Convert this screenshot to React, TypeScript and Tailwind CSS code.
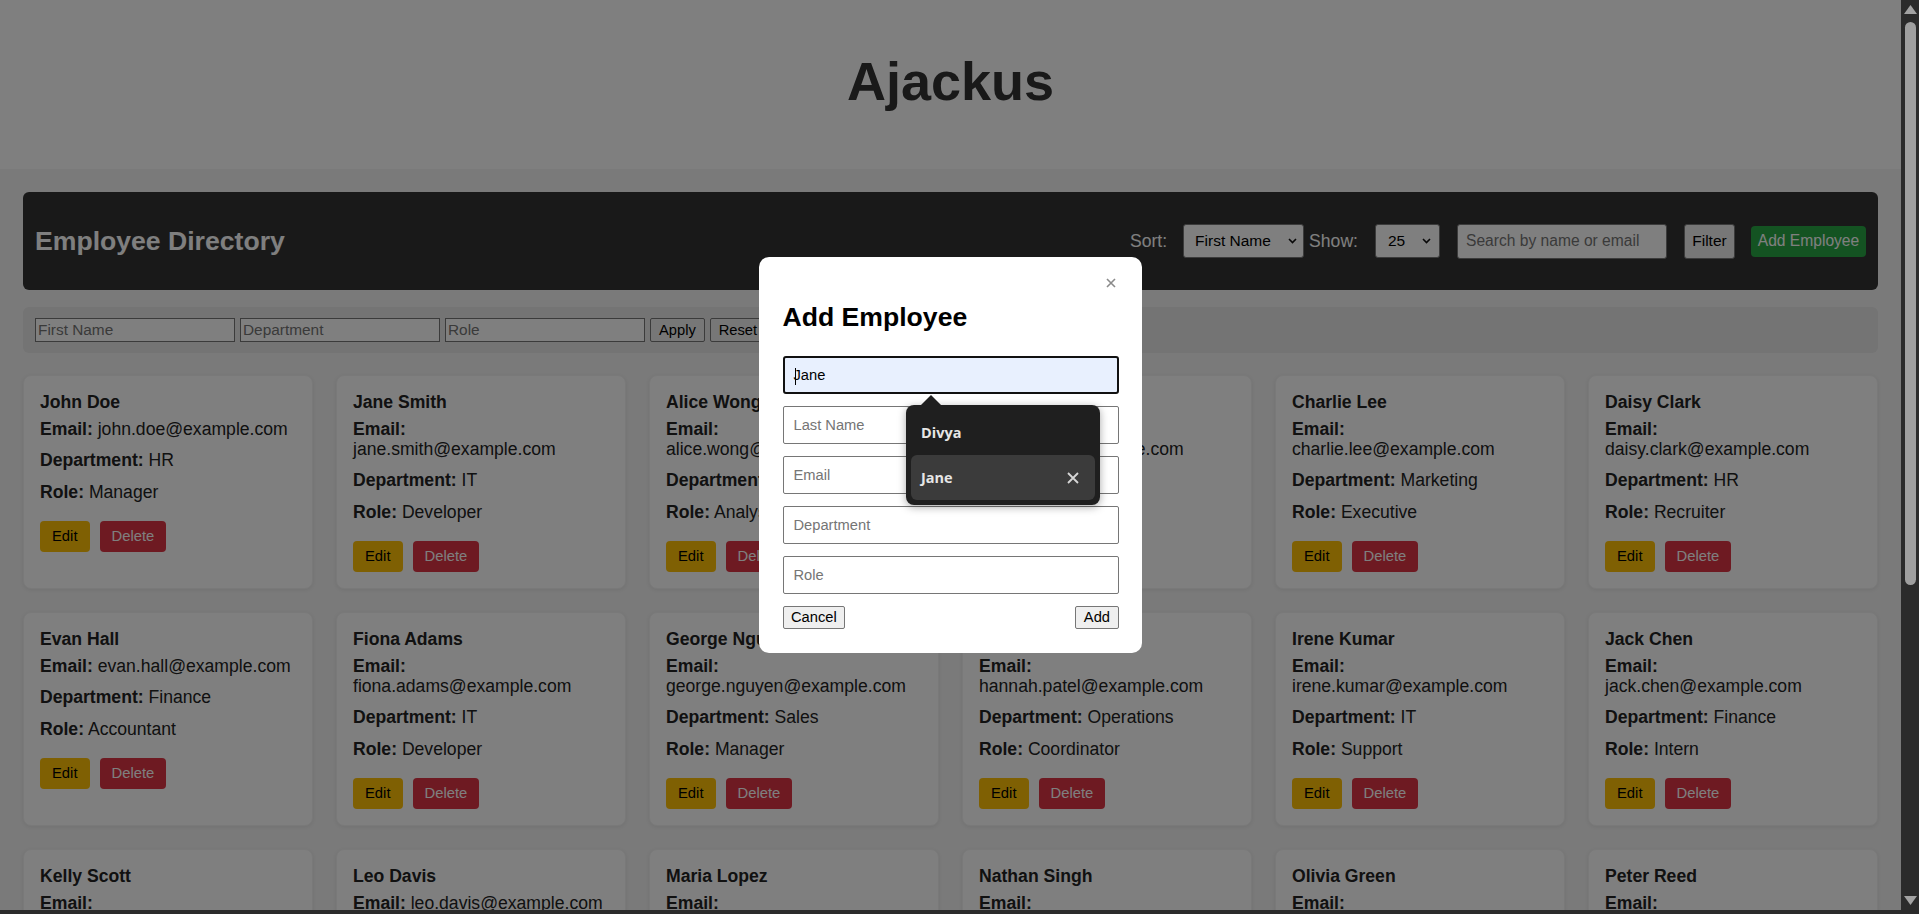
import React from "react";

type Emp = { name: string; email: string; dept: string; role: string };

const employees: Emp[] = [
  { name: "John Doe", email: "john.doe@example.com", dept: "HR", role: "Manager" },
  { name: "Jane Smith", email: "jane.smith@example.com", dept: "IT", role: "Developer" },
  { name: "Alice Wong", email: "alice.wong@example.com", dept: "Finance", role: "Analyst" },
  { name: "Bob Brown", email: "bob.brown@example.com", dept: "IT", role: "Tester" },
  { name: "Charlie Lee", email: "charlie.lee@example.com", dept: "Marketing", role: "Executive" },
  { name: "Daisy Clark", email: "daisy.clark@example.com", dept: "HR", role: "Recruiter" },
  { name: "Evan Hall", email: "evan.hall@example.com", dept: "Finance", role: "Accountant" },
  { name: "Fiona Adams", email: "fiona.adams@example.com", dept: "IT", role: "Developer" },
  { name: "George Nguyen", email: "george.nguyen@example.com", dept: "Sales", role: "Manager" },
  { name: "Hannah Patel", email: "hannah.patel@example.com", dept: "Operations", role: "Coordinator" },
  { name: "Irene Kumar", email: "irene.kumar@example.com", dept: "IT", role: "Support" },
  { name: "Jack Chen", email: "jack.chen@example.com", dept: "Finance", role: "Intern" },
  { name: "Kelly Scott", email: "kelly.scott@example.com", dept: "Marketing", role: "Designer" },
  { name: "Leo Davis", email: "leo.davis@example.com", dept: "Sales", role: "Executive" },
  { name: "Maria Lopez", email: "maria.lopez@example.com", dept: "HR", role: "Coordinator" },
  { name: "Nathan Singh", email: "nathan.singh@example.com", dept: "IT", role: "Developer" },
  { name: "Olivia Green", email: "olivia.green@example.com", dept: "Finance", role: "Analyst" },
  { name: "Peter Reed", email: "peter.reed@example.com", dept: "Operations", role: "Manager" },
];

const FONT = "font-['Liberation_Sans',Arial,sans-serif]";

function Chevron() {
  return (
    <svg width="9" height="6" viewBox="0 0 9 6" className="shrink-0">
      <path d="M1 1 L4.5 4.5 L8 1" fill="none" stroke="#111" strokeWidth="1.6" />
    </svg>
  );
}

function Card({ e }: { e: Emp }) {
  return (
    <div className="bg-white border border-[#f2f2f2] rounded-lg shadow-[0_1px_5px_rgba(0,0,0,0.08)] pl-[16px] pr-[19px] pt-4 pb-4 text-[17.6px] leading-[20px] text-[#222]">
      <h3 className="font-bold mb-[7px]">{e.name}</h3>
      <p className="mb-[11px]">
        <strong>Email:</strong> {e.email}
      </p>
      <p className="mb-[12px]">
        <strong>Department:</strong> {e.dept}
      </p>
      <p className="mb-[19px]">
        <strong>Role:</strong> {e.role}
      </p>
      <div className="flex gap-[10px]">
        <button className="bg-[#ffc107] text-black rounded-[4px] px-3 h-[31px] text-[14.8px] leading-none">
          Edit
        </button>
        <button className="bg-[#dc3545] text-white rounded-[4px] px-3 h-[31px] text-[14.8px] leading-none">
          Delete
        </button>
      </div>
    </div>
  );
}

function Page() {
  return (
    <div className="min-h-full bg-[#f5f5f5]">
      <header className="h-[169px] bg-white pt-[50px] text-center">
        <h1 className="text-[54px] font-bold leading-[62px] text-[#333]">Ajackus</h1>
      </header>
      <main className="px-[23px] pt-[23px]">
        <nav className="h-[98px] bg-[#333] rounded-md px-[12px] flex items-center justify-between">
          <h2 className="text-[26.6px] font-bold text-white leading-[30px]">Employee Directory</h2>
          <div className="flex items-center text-white">
            <span className="text-[17.6px] mr-[16px]">Sort:</span>
            <div className="w-[121px] h-[34px] bg-white border border-[#767676] rounded-[3px] pl-[11px] pr-[6px] flex items-center justify-between text-[15.5px] text-black">
              <span>First Name</span>
              <Chevron />
            </div>
            <span className="text-[17.6px] ml-[5px] mr-[17px]">Show:</span>
            <div className="w-[65px] h-[34px] bg-white border border-[#767676] rounded-[3px] pl-[12px] pr-[8px] flex items-center justify-between text-[15.5px] text-black">
              <span>25</span>
              <Chevron />
            </div>
            <div className="ml-[17px] w-[210px] h-[35px] bg-white border border-[#767676] rounded-[3px] px-[8px] flex items-center text-[15.6px] text-[#757575]">
              Search by name or email
            </div>
            <button className="ml-[17px] w-[51px] h-[35px] bg-[#efefef] border border-[#767676] rounded-[3px] text-[15.5px] text-black">
              Filter
            </button>
            <button className="ml-[16px] w-[115px] h-[31px] bg-[#28a745] rounded-[4px] text-[15.6px] text-white">
              Add Employee
            </button>
          </div>
        </nav>

        <div className="mt-[17px] h-[46px] bg-[#e8e8e8] rounded-md px-[12px] flex items-center gap-[5px]">
          {["First Name", "Department", "Role"].map((p) => (
            <div
              key={p}
              className="w-[200px] h-[24px] bg-white border border-[#767676] px-[2px] flex items-center text-[15.4px] text-[#757575]"
            >
              {p}
            </div>
          ))}
          <button className="h-[24px] bg-[#efefef] border border-[#767676] rounded-[2px] px-[8px] text-[14.7px] text-black">
            Apply
          </button>
          <button className="h-[24px] bg-[#efefef] border border-[#767676] rounded-[2px] px-[8px] text-[14.7px] text-black">
            Reset
          </button>
        </div>

        <div className="mt-[22px] grid grid-cols-6 gap-x-[23px] gap-y-[23px]">
          {employees.map((e) => (
            <Card key={e.name} e={e} />
          ))}
        </div>
      </main>
    </div>
  );
}

function Modal() {
  const fields = ["Last Name", "Email", "Department", "Role"];
  return (
    <div className="absolute inset-0 bg-black/50 flex items-center justify-center">
      <div className="relative w-[383px] bg-white rounded-[10px] px-[23.5px] pt-[24px] pb-[24px]">
        <svg width="10" height="10" viewBox="0 0 10 10" className="absolute right-[26px] top-[21px]">
          <path d="M1 1 L9 9 M9 1 L1 9" stroke="#8a8a8a" strokeWidth="1.6" />
        </svg>
        <h2 className="mt-[21px] mb-[24px] text-[26.6px] font-bold leading-[30px] text-black">Add Employee</h2>
        <div className="flex flex-col gap-[12px]">
          <div className="relative h-[38px] border-2 border-[#111] bg-[#e8f0fe] rounded-[3px] pl-[9px] flex items-center text-[14.7px] text-black">
            <span className="absolute left-[10px] top-[10px] w-px h-[17px] bg-black" />
            Jane
          </div>
          {fields.map((f) => (
            <div
              key={f}
              className="h-[38px] border border-[#767676] bg-white rounded-[2px] pl-[10px] flex items-center text-[14.7px] text-[#757575]"
            >
              {f}
            </div>
          ))}
        </div>
        <div className="mt-[12px] flex justify-between">
          <button className="h-[22.5px] bg-[#efefef] border border-[#767676] rounded-[2px] px-[7.5px] text-[14.7px] leading-[17px] text-black">
            Cancel
          </button>
          <button className="h-[22.5px] bg-[#efefef] border border-[#767676] rounded-[2px] px-[7.5px] text-[14.7px] leading-[17px] text-black">
            Add
          </button>
        </div>

        <div className="absolute left-[147px] top-[148px] w-[194px] bg-[#1f1f1f] rounded-[8px] p-[5px] shadow-[0_2px_8px_rgba(0,0,0,0.35)] font-['Open_Sans','Noto_Sans',sans-serif]">
          <svg width="22" height="11" viewBox="0 0 22 11" className="absolute left-[14px] -top-[10px]">
            <path d="M0 11 L11 0 L22 11 Z" fill="#1f1f1f" />
          </svg>
          <div className="h-[45px] px-[10px] flex items-center text-[14.5px] font-bold text-[#e6e6e6]">Divya</div>
          <div className="h-[45px] pl-[10px] pr-[16px] bg-[#3b3b3b] rounded-[6px] flex items-center justify-between text-[14.5px] font-bold text-[#e6e6e6]">
            <span>Jane</span>
            <svg width="12" height="12" viewBox="0 0 12 12">
              <path d="M1 1 L11 11 M11 1 L1 11" stroke="#d6d6d6" strokeWidth="1.8" />
            </svg>
          </div>
        </div>
      </div>
    </div>
  );
}

function Scrollbar() {
  return (
    <div className="relative w-[18px] shrink-0 bg-[#2b2b2b]">
      <svg width="13" height="9" viewBox="0 0 13 9" className="absolute left-[3px] top-[5px]">
        <path d="M0 9 L6.5 0 L13 9 Z" fill="#a3a3a3" />
      </svg>
      <div className="absolute left-[4px] top-[22px] w-[11px] h-[563px] rounded-full bg-[#9f9f9f]" />
      <svg width="13" height="9" viewBox="0 0 13 9" className="absolute left-[3px] top-[896px]">
        <path d="M0 0 L13 0 L6.5 9 Z" fill="#a3a3a3" />
      </svg>
    </div>
  );
}

export default function App() {
  return (
    <div className={`w-full h-[914px] overflow-hidden flex flex-col ${FONT}`}>
      <div className="h-[910px] flex">
        <div className="relative flex-1 overflow-hidden">
          <Page />
          <Modal />
        </div>
        <Scrollbar />
      </div>
      <div className="h-[4px] bg-[#2b2b2b]" />
    </div>
  );
}
